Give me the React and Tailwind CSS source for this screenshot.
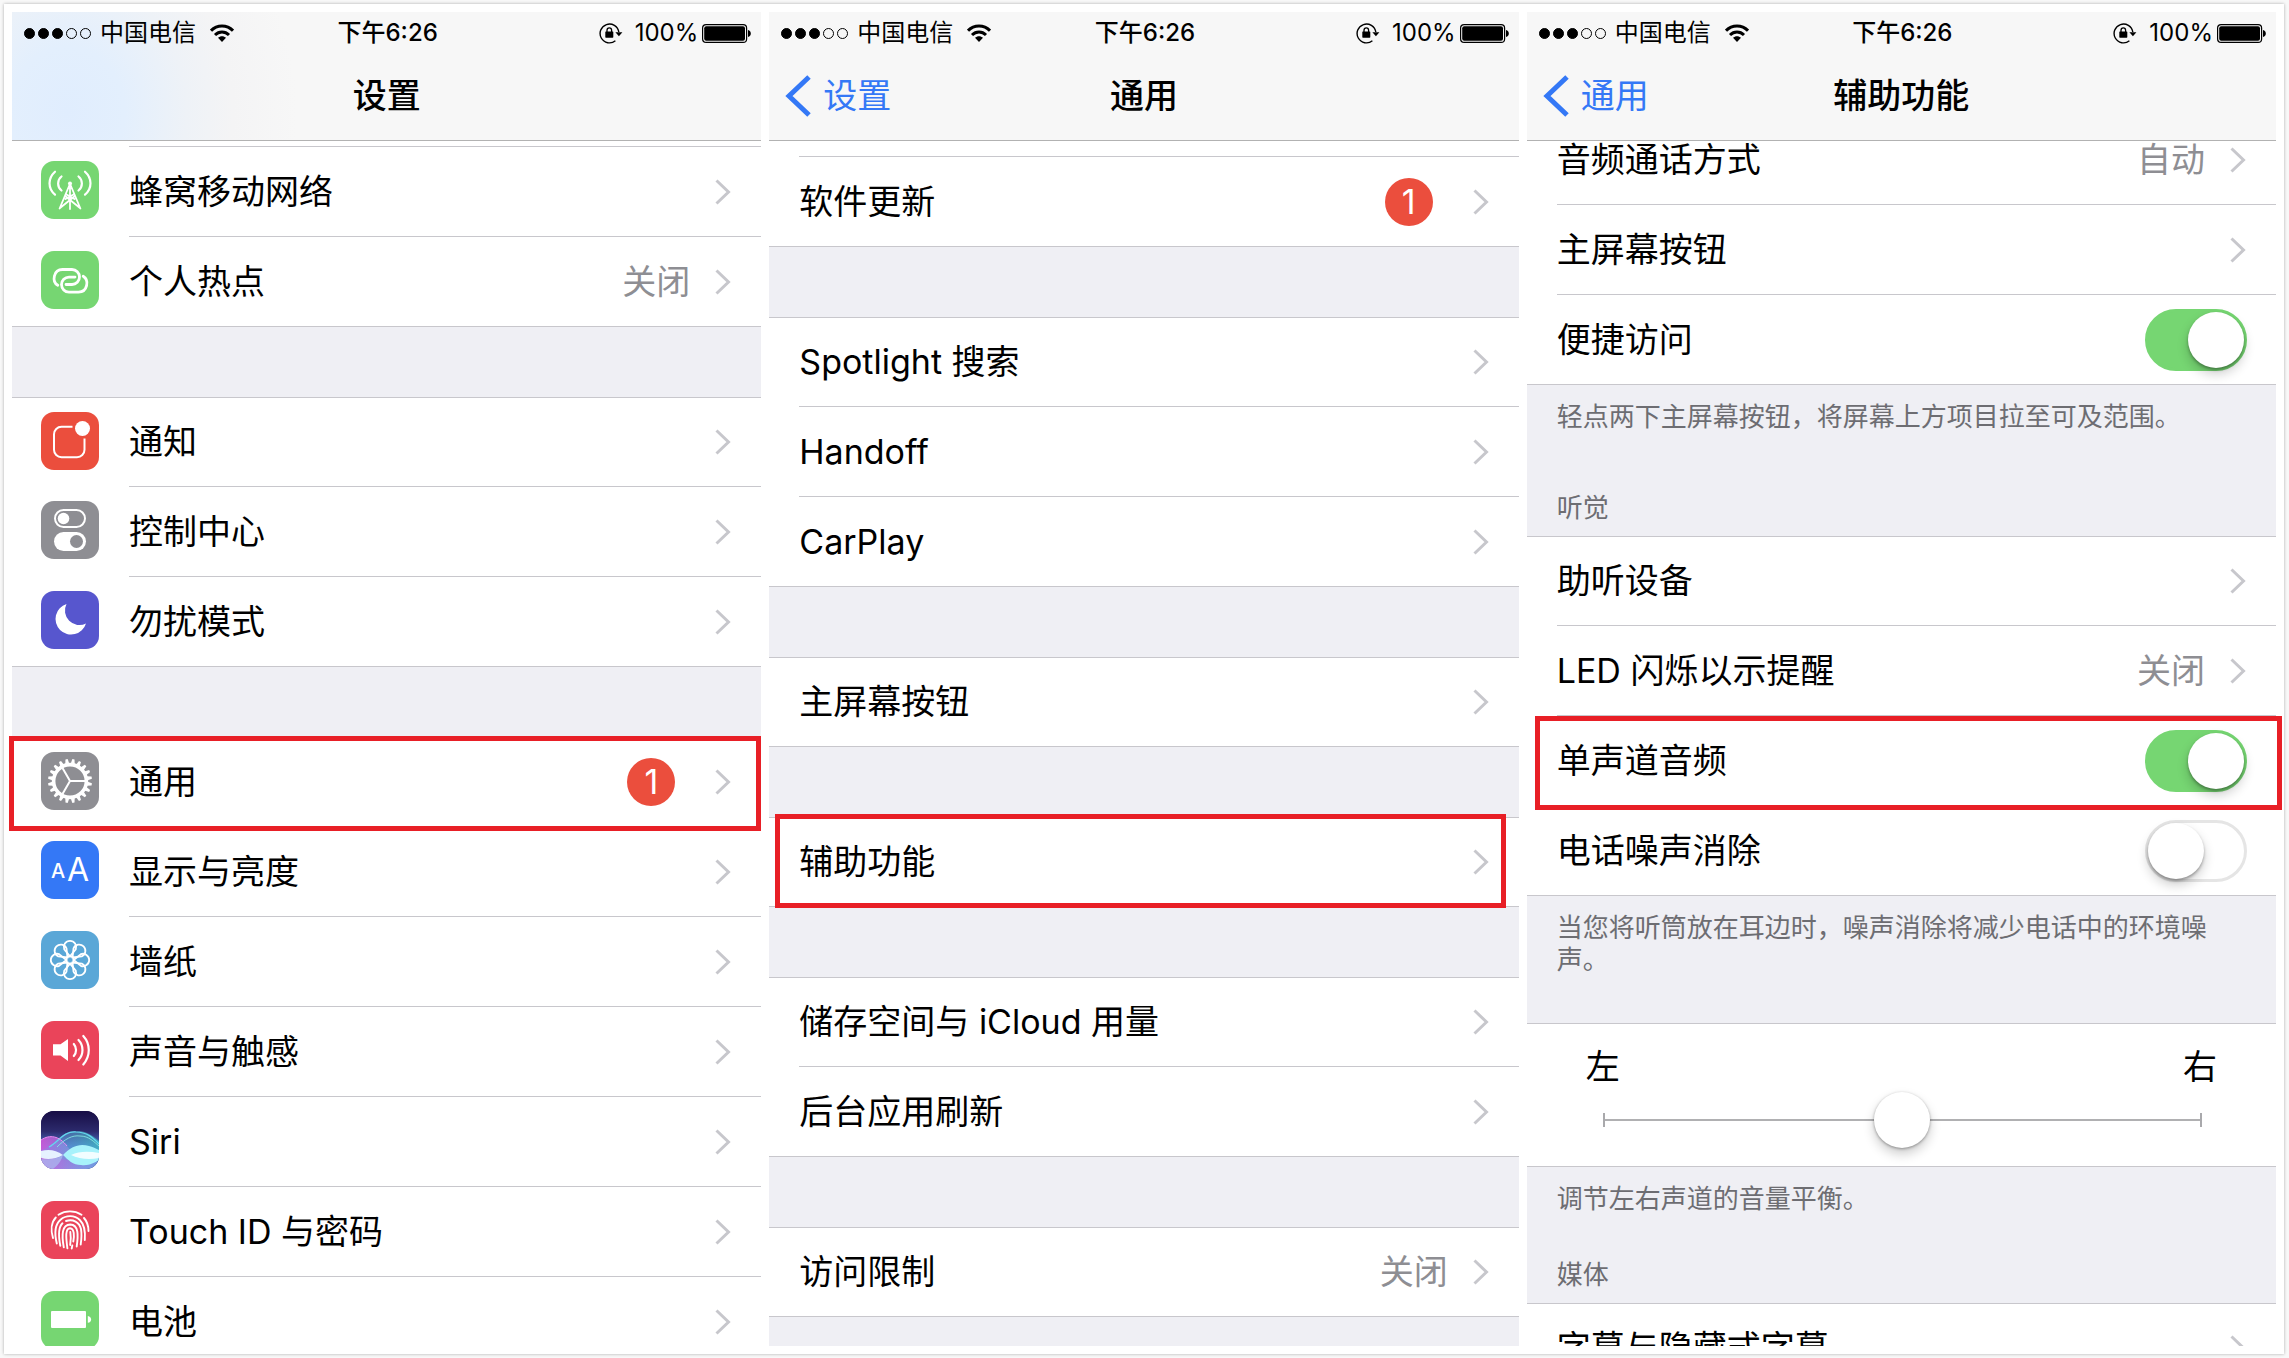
import React, { useState } from "react";

/* ---------- status bar icons ---------- */

const WifiIcon = () => (
  <svg width="24" height="18" viewBox="0 0 24 18" fill="none" stroke="#000" strokeWidth="3">
    <path d="M1 6.6C7 .3 17 .3 23 6.6" />
    <path d="M5 11c4-4 10-4 14 0" />
    <path d="M12 18l-4-4.2c2.2-2.2 5.8-2.2 8 0z" fill="#000" stroke="none" />
  </svg>
);

const RotationLockIcon = () => (
  <svg width="24" height="21" viewBox="0 0 24 21" fill="none">
    <path d="M19.8 9A9.4 9.4 0 1 0 16.4 17.8" stroke="#000" strokeWidth="1.4" />
    <path d="M16.4 9.3h7L19.9 13.2z" fill="#000" />
    <rect x="6.3" y="8.5" width="8" height="6.2" rx=".6" fill="#000" />
    <path d="M8 9V7.2a2.3 2.3 0 0 1 4.6 0V9" stroke="#000" strokeWidth="1.3" />
  </svg>
);

const BatteryFullIcon = () => (
  <svg width="49" height="19" viewBox="0 0 49 19">
    <rect x=".6" y=".6" width="44" height="17.8" rx="3.5" fill="none" stroke="#000" strokeWidth="1.2" />
    <rect x="2.2" y="2.2" width="40.8" height="14.6" rx="2" fill="#000" />
    <path d="M46 6c1.8.3 2.8 1.6 2.8 3.5S47.800 12.700 46 13z" fill="#000" />
  </svg>
);

/* ---------- settings icons, all on a 58 grid ---------- */

const Cellular = () => (
  <g fill="none" stroke="#fff" strokeWidth="1.8" strokeLinecap="round">
    <circle cx="29" cy="22.5" r="2" fill="#fff" stroke="none" />
    <path d="M28.500 24L18.600 47.500M29.500 24L39.400 47.500M29 24v24M19 47l14.300-11.500M39 47L24.700 35.500M25.500 33.500L33.500 38M32.500 33.500L24.500 38" />
    <path d="M20.500 15.500c-4.500 3.500-4.500 10.500 0 14M37.500 15.500c4.500 3.500 4.500 10.500 0 14M14 10.700c-7.300 6.500-7.300 16.800 0 23M44 10.700c7.300 6.500 7.300 16.800 0 23" strokeWidth="2.2" />
  </g>
);

const LINK = "M16.800 34.300C10.500 30.500 12.500 18.500 21.500 18.500H31a7.500 7.500 0 0 1 0 15h-6";
const Hotspot = () => (
  <g fill="none" stroke="#fff" strokeWidth="2.8" strokeLinecap="round">
    <path d={LINK} />
    <path d={LINK} transform="rotate(180 29.500 29.800)" />
  </g>
);

const Notice = () => (
  <g>
    <path d="M31.500 14.800H20.500a7.500 7.500 0 0 0-7.500 7.500v15.400a7.500 7.500 0 0 0 7.500 7.500H36a7.500 7.500 0 0 0 7.500-7.500V26.500" fill="none" stroke="#fff" strokeWidth="2" />
    <circle cx="41.5" cy="16.5" r="7.5" fill="#fff" />
  </g>
);

const ControlCenter = () => (
  <g>
    <rect x="14" y="9" width="30" height="17" rx="8.5" fill="none" stroke="#fff" strokeWidth="2" />
    <circle cx="22.5" cy="17.5" r="5.8" fill="#fff" />
    <rect x="13" y="31" width="32" height="19" rx="9.5" fill="#fff" />
    <circle cx="35.5" cy="40.5" r="6.5" fill="#8e8e93" />
  </g>
);

const Moon = () => (
  <path d="M25.500 13A15.600 15.600 0 1 0 45 32.500A14.500 14.500 0 0 1 25.500 13z" fill="#fff" />
);

const Gear = () => (
  <g>
    {Array.from({ length: 20 }).map((_, i) => (
      <path key={i} d="M26.900 12l1-5h2.200l1 5z" fill="#fff" transform={`rotate(${i * 18 + 9} 29 29)`} />
    ))}
    <circle cx="29" cy="29" r="16.4" fill="none" stroke="#fff" strokeWidth="3.6" />
    <path d="M29 29h15M29 29l-7.500-13M29 29l-7.500 13" stroke="#fff" strokeWidth="2" />
  </g>
);

const Display = () => (
  <g fill="#fff" fontFamily="Inter, sans-serif">
    <text x="10" y="37" fontSize="20" fontWeight="500">A</text>
    <text x="26" y="40" fontSize="32">A</text>
  </g>
);

const Flower = () => (
  <g fill="none" stroke="#fff" strokeWidth="1.8">
    <circle cx="29" cy="29" r="3.6" />
    {Array.from({ length: 8 }).map((_, i) => (
      <path
        key={i}
        d="M29 25.400l-5.800-7.200A6.200 6.200 0 1 1 34.800 18.200z"
        transform={`rotate(${i * 45} 29 29)`}
      />
    ))}
  </g>
);

const Sound = () => (
  <g fill="none" stroke="#fff" strokeWidth="2.2" strokeLinecap="round">
    <path d="M12 23.300h7.500L27 18v22l-7.500-5.500H12z" fill="#fff" stroke="none" />
    <path d="M32.800 23c3 3.500 3 8.500 0 12M37.500 19c5.300 5.500 5.300 14.500 0 20M42.300 15c7.300 8 7.300 20 0 28.500" />
  </g>
);

const Siri = () => (
  <g>
    <defs>
      <linearGradient id="siriSky" x1="0" y1="0" x2="0" y2="1">
        <stop offset="0" stopColor="#170d45" />
        <stop offset=".35" stopColor="#2c2a6c" />
        <stop offset=".6" stopColor="#4a6fc4" />
        <stop offset="1" stopColor="#5b9bd8" />
      </linearGradient>
      <linearGradient id="siriPink" x1="0" y1="0" x2="1" y2="0">
        <stop offset="0" stopColor="#d858dc" />
        <stop offset="1" stopColor="#8fa4f0" stopOpacity=".5" />
      </linearGradient>
      <linearGradient id="siriTeal" x1="0" y1="0" x2="1" y2="0">
        <stop offset="0" stopColor="#7d8bf0" stopOpacity=".5" />
        <stop offset="1" stopColor="#3fc9c0" />
      </linearGradient>
    </defs>
    <rect width="58" height="58" fill="url(#siriSky)" />
    <path d="M0 29c9-6 18-4 26 6s16 12 32 16v7H0z" fill="url(#siriPink)" opacity=".85" />
    <path d="M0 39c12-2 18-18 34-19 12-1 19 6 24 10v16c-18 6-38 2-58 0z" fill="url(#siriTeal)" opacity=".65" />
    <path d="M8 36c10-5 14-16 27-15 12 0 18 7 23 12" fill="none" stroke="#63d8ee" strokeWidth="1.2" />
    <path d="M0 29c9-6 18-4 26 6" fill="none" stroke="#ee8df2" strokeWidth="1" />
    <path d="M16 36c8-8 15-12 23-11 9 0 14 6 19 10" fill="none" stroke="#8bf0e6" strokeWidth="1" opacity=".8" />
    <path d="M0 48c9 1 16 0 22-4-2 7-6 11-10 14H0z" fill="#a9b4ee" opacity=".8" />
    <path d="M0 40c8-2 15-1 22 4-7 4-15 5-22 3z" fill="#e6f2ff" />
    <path d="M22 44c8-9 17-12 26-9 5 1 7 3 10 4v10c-5 3-10 6-18 5-8 0-13-5-18-10z" fill="#a8f2fb" />
    <path d="M30 44c8-4 18-4 28-2v5c-10 2-20 1-28-3z" fill="#fff" opacity=".85" />
  </g>
);

const Fingerprint = () => (
  <g fill="none" stroke="#fff" strokeWidth="1.9" strokeLinecap="round">
    <path d="M17.500 13.700C24.500 9.300 33.500 9.300 40.500 13.700" />
    <path d="M14.800 16.500C10.500 21 9.500 29 12 37M43 17c3.500 4 4.500 8 4.500 13" />
    <path d="M15.800 42.500C13 31 14.500 23 19.500 18.700c6-5 14-4.500 19.300.3C43.500 23.500 44.500 30 43.800 39" />
    <path d="M19.300 44.800C17 33 17.500 26 21.500 22.300M25 20c7-2.500 13.500 1.300 15 8 .8 5 .5 10-.3 15.500" />
    <path d="M22.800 46.300C20.500 34 20.800 23.700 29.300 23.500c8.500.3 8 11 6.400 22" />
    <path d="M26.400 47.300C25 37 24 27.300 29 27.200c4.500.2 4.300 8 3.300 13.300M31.300 44.500l-.6 3" />
    <path d="M29.300 31c.7 4 .6 8-.1 13" />
  </g>
);

const Battery = () => (
  <g fill="#fff">
    <rect x="10" y="20" width="35" height="17" rx="1" />
    <path d="M46.800 25c2.200.4 3.300 1.600 3.300 3.400s-1.100 3-3.300 3.400z" />
  </g>
);

const AppIcon = ({ color, children }) => (
  <svg
    width="58"
    height="58"
    viewBox="0 0 58 58"
    className="mb-1 mr-[30px] shrink-0 rounded-[13px]"
    style={{ backgroundColor: color }}
  >
    {children}
  </svg>
);

/* ---------- shared parts ---------- */

const Chevron = () => (
  <svg width="16" height="26" viewBox="0 0 16 26" fill="none" className="shrink-0">
    <path d="M1.500 1.500L13.500 13L1.500 24.500" stroke="#c7c7cc" strokeWidth="3" />
  </svg>
);

const StatusBar = () => (
  <div className="grid h-10 grid-cols-3 items-center pl-3 pr-[10px] pt-[2px] text-[24px] leading-[30px]">
    <div className="flex items-center">
      <div className="mr-[9px] flex gap-[3px]">
        {[1, 1, 1, 0, 0].map((full, i) => (
          <span
            key={i}
            className={`size-[11px] rounded-full border border-black ${full ? "bg-black" : ""}`}
          />
        ))}
      </div>
      <span className="mr-[14px] whitespace-nowrap">中国电信</span>
      <WifiIcon />
    </div>
    <div className="text-center font-medium">下午6:26</div>
    <div className="flex items-center justify-end">
      <RotationLockIcon />
      <span className="ml-3 mr-1">100%</span>
      <BatteryFullIcon />
    </div>
  </div>
);

const Screen = ({ title, back, tint, children }) => (
  <section className="flex min-h-0 flex-col bg-[#efeff4]">
    <header
      className={`shrink-0 border-b border-[#b2b2b2] bg-[#f7f7f7] ${
        tint
          ? "bg-[radial-gradient(ellipse_230px_260px_at_55px_100px,#e0edfe_0%,#e3effd_25%,#eef2f7_52%,#f4f4f5_72%,#f7f7f7_100%)]"
          : ""
      }`}
    >
      <StatusBar />
      <nav className="grid h-[88px] grid-cols-3 items-center px-4 text-[34px]">
        <div>
          {back && (
            <button type="button" className="flex items-center gap-3 text-[#3478f6]">
              <svg width="26" height="42" viewBox="0 0 26 42" fill="none">
                <path d="M24 2L4 21L24 40" stroke="#3478f6" strokeWidth="5" />
              </svg>
              {back}
            </button>
          )}
        </div>
        <h1 className="text-center font-medium">{title}</h1>
      </nav>
    </header>
    <div className="min-h-0 flex-1 overflow-y-clip">{children}</div>
  </section>
);

const Group = ({ first, children }) => (
  <div className={`bg-white ${first ? "" : "mt-[70px]"}`}>{children}</div>
);

// red frame drawn over a row
const Mark = ({ className }) => (
  <span className={`pointer-events-none absolute z-10 border-[5px] border-[#e81f26] ${className}`} />
);

const Row = ({ icon, color, label, value, badge, top, last, mark }) => (
  <a
    href="#"
    className={`relative flex h-[90px] items-center border-[#c8c7cc] ${
      icon ? "pl-[29px]" : "pl-[30px]"
    } ${top ? "border-t" : ""} ${last ? "border-b" : ""}`}
  >
    {icon && <AppIcon color={color}>{icon}</AppIcon>}
    <span
      className={`flex flex-1 items-center self-stretch border-[#c8c7cc] pr-[30px] ${
        last ? "" : "border-b"
      }`}
    >
      <span className="flex-1">{label}</span>
      {value && <span className="mr-[25px] text-[#8e8e93]">{value}</span>}
      {badge && (
        <span className="mr-10 flex size-12 items-center justify-center rounded-full bg-[#eb4e3d] text-white">
          {badge}
        </span>
      )}
      <Chevron />
    </span>
    {mark && <Mark className={mark} />}
  </a>
);

const SwitchRow = ({ id, label, on, last, mark }) => {
  const [checked, setChecked] = useState(on);
  return (
    <div className={`relative flex h-[90px] items-center border-[#c8c7cc] pl-[30px] ${last ? "border-b" : ""}`}>
      <div
        className={`flex flex-1 items-center self-stretch border-[#c8c7cc] pr-[29px] ${
          last ? "" : "border-b"
        }`}
      >
        <label htmlFor={id} className="flex-1">{label}</label>
        <input
          id={id}
          type="checkbox"
          role="switch"
          checked={checked}
          onChange={(e) => setChecked(e.target.checked)}
          className="flex h-[62px] w-[102px] appearance-none items-center rounded-full border-[3px] border-[#e5e5e5] bg-white before:size-14 before:shrink-0 before:rounded-full before:bg-white before:shadow-[0_6px_12px_rgba(0,0,0,0.2),0_2px_3px_rgba(0,0,0,0.3)] checked:justify-end checked:border-[#76d672] checked:bg-[#76d672]"
        />
      </div>
      {mark && <Mark className={mark} />}
    </div>
  );
};

// grey area between groups with a note on top and the next group's caption below
const Notes = ({ note, caption, className }) => (
  <div className={`flex flex-col justify-between px-[30px] pb-3 pt-4 text-[26px] leading-8 text-[#6d6d72] ${className}`}>
    <p>{note}</p>
    {caption && <h2>{caption}</h2>}
  </div>
);

const SettingsScreen = () => (
  <Screen title="设置" tint>
    <Group first>
      <div className="ml-[117px] h-[6px] border-b border-[#c8c7cc]" />
      <Row icon={<Cellular />} color="#76d672" label="蜂窝移动网络" />
      <Row icon={<Hotspot />} color="#76d672" label="个人热点" value="关闭" last />
    </Group>
    <Group>
      <Row icon={<Notice />} color="#eb4e3d" label="通知" top />
      <Row icon={<ControlCenter />} color="#8e8e93" label="控制中心" />
      <Row icon={<Moon />} color="#5756ce" label="勿扰模式" last />
    </Group>
    <Group>
      <Row
        icon={<Gear />}
        color="#8e8e93"
        label="通用"
        badge="1"
        top
        mark="-left-[3px] right-0 -top-[2px] -bottom-[4px]"
      />
      <Row icon={<Display />} color="#3478f6" label="显示与亮度" />
      <Row icon={<Flower />} color="#5aa7d7" label="墙纸" />
      <Row icon={<Sound />} color="#ea445a" label="声音与触感" />
      <Row icon={<Siri />} color="#170d45" label="Siri" />
      <Row icon={<Fingerprint />} color="#ea445a" label="Touch ID 与密码" />
      <Row icon={<Battery />} color="#76d672" label="电池" />
    </Group>
  </Screen>
);

const GeneralScreen = () => (
  <Screen title="通用" back="设置">
    <Group first>
      <div className="ml-[30px] h-4 border-b border-[#c8c7cc]" />
      <Row label="软件更新" badge="1" last />
    </Group>
    <Group>
      <Row label="Spotlight 搜索" top />
      <Row label="Handoff" />
      <Row label="CarPlay" last />
    </Group>
    <Group>
      <Row label="主屏幕按钮" top last />
    </Group>
    <Group>
      <Row label="辅助功能" top last mark="left-[6px] right-[13px] -top-[4px] -bottom-[2px]" />
    </Group>
    <Group>
      <Row label="储存空间与 iCloud 用量" top />
      <Row label="后台应用刷新" last />
    </Group>
    <Group>
      <Row label="访问限制" value="关闭" top last />
    </Group>
  </Screen>
);

const AccessibilityScreen = () => {
  const [balance, setBalance] = useState(50);
  return (
    <Screen title="辅助功能" back="通用">
      <div className="-mt-[26px] bg-white">
        <Row label="音频通话方式" value="自动" />
        <Row label="主屏幕按钮" />
        <SwitchRow id="reachability" label="便捷访问" on last />
      </div>
      <Notes
        note="轻点两下主屏幕按钮，将屏幕上方项目拉至可及范围。"
        caption="听觉"
        className="h-[151px]"
      />
      <div className="bg-white">
        <Row label="助听设备" top />
        <Row label="LED 闪烁以示提醒" value="关闭" />
        <SwitchRow
          id="mono"
          label="单声道音频"
          on
          mark="left-2 -right-[6px] top-0 -bottom-[4px]"
        />
        <SwitchRow id="noise" label="电话噪声消除" on={false} last />
      </div>
      <Notes
        note="当您将听筒放在耳边时，噪声消除将减少电话中的环境噪声。"
        className="h-[127px]"
      />
      <div className="h-36 border-y border-[#c8c7cc] bg-white px-[59px] pt-[26px]">
        <div className="flex justify-between leading-[34px]">
          <label htmlFor="balance">左</label>
          <label htmlFor="balance">右</label>
        </div>
        <div className="ml-[17px] mr-[15px] mt-2 flex items-center">
          <span className="h-[14px] w-[2px] bg-[#a9a9ac]" />
          <input
            id="balance"
            type="range"
            min="0"
            max="100"
            value={balance}
            onChange={(e) => setBalance(Number(e.target.value))}
            className="h-14 min-w-0 flex-1 appearance-none bg-transparent [&::-webkit-slider-runnable-track]:h-[2px] [&::-webkit-slider-runnable-track]:bg-[#b0b0b2] [&::-webkit-slider-thumb]:-mt-[27px] [&::-webkit-slider-thumb]:size-14 [&::-webkit-slider-thumb]:appearance-none [&::-webkit-slider-thumb]:rounded-full [&::-webkit-slider-thumb]:bg-white [&::-webkit-slider-thumb]:shadow-[0_6px_12px_rgba(0,0,0,0.2),0_1px_3px_rgba(0,0,0,0.35)]"
          />
          <span className="h-[14px] w-[2px] bg-[#a9a9ac]" />
        </div>
      </div>
      <Notes note="调节左右声道的音量平衡。" caption="媒体" className="h-[136px]" />
      <div className="bg-white">
        <Row label="字幕与隐藏式字幕" top />
      </div>
    </Screen>
  );
};

const App = () => {
  return (
    <div
      lang="zh-CN"
      className="h-screen bg-[#f8f8f8] p-1 font-[Inter,'Noto_Sans_CJK_SC',sans-serif] text-[34px] leading-[44px] text-black"
    >
      <main className="mr-px grid h-full grid-cols-3 grid-rows-1 gap-2 bg-white p-2 shadow-[0_0_3px_rgba(0,0,0,0.3)]">
        <SettingsScreen />
        <GeneralScreen />
        <AccessibilityScreen />
      </main>
    </div>
  );
};

export default App;
